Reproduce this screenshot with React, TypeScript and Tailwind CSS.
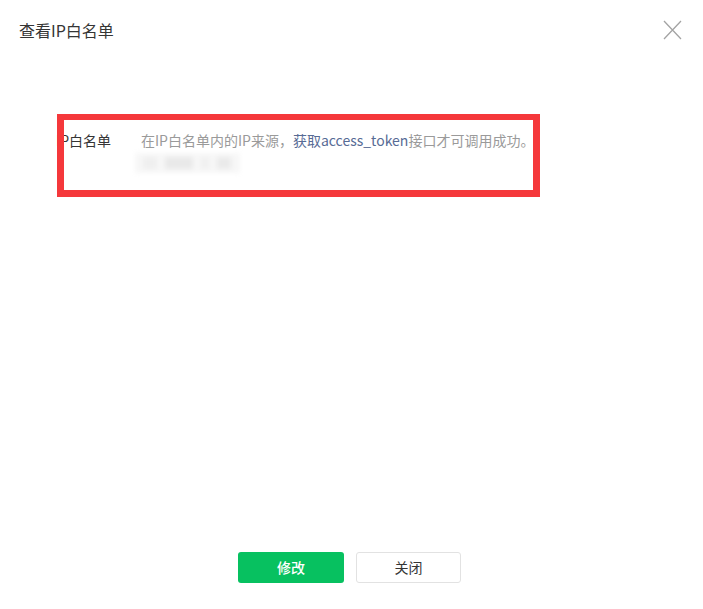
import { useState } from 'react';

export default function App() {
    const [open, setOpen] = useState(true);

    return (
        <div className="relative h-[609px] w-[703px] bg-white font-['Noto_Sans_CJK_SC','Microsoft_YaHei',sans-serif] text-[#353535] flex flex-col">
            {/* Header */}
            <div className="flex items-start justify-between pl-[19px] pr-[21px] pt-[18px]">
                <h3 className="text-[16px] leading-[24px]">查看IP白名单</h3>
                <button
                    onClick={() => setOpen(!open)}
                    className="mt-[2px] text-[#a3a3a3]"
                    title="关闭"
                >
                    <svg width="19" height="20" viewBox="0 0 19 20" fill="none" stroke="currentColor" strokeWidth="1.3">
                        <path d="M1 1 L18 19 M18 1 L1 19" />
                    </svg>
                </button>
            </div>

            {/* Body */}
            <div className="flex mt-[88px] text-[14px] leading-[20px]">
                <div className="w-[111px] shrink-0 text-right">IP白名单</div>
                <div className="ml-[30px]">
                    <p className="text-[#9a9a9a]">
                        在IP白名单内的IP来源，<span className="text-[#576b95]">获取access_token</span>接口才可调用成功。
                    </p>
                    <div className="-ml-[6px] mt-[3px] h-[20px] w-[105px] bg-[#f7f7f7] flex items-center gap-[8px] px-[8px] blur-[2.5px]">
                        <span className="h-[12px] w-[14px] bg-[#efefef]" />
                        <span className="h-[12px] w-[28px] bg-[#e9e9e9]" />
                        <span className="h-[12px] w-[8px] bg-[#f0f0f0]" />
                        <span className="h-[12px] w-[14px] bg-[#eaeaea]" />
                    </div>
                </div>
            </div>

            {/* Footer */}
            <div className="mt-auto mb-[26px] flex justify-center gap-[12px] pr-[4px]">
                <button className="h-[31px] w-[106px] rounded-[3px] bg-[#07c160] text-[14px] font-medium text-white">
                    修改
                </button>
                <button className="h-[31px] w-[105px] rounded-[3px] border border-[#e2e2e2] bg-white text-[14px] text-[#353535]">
                    关闭
                </button>
            </div>

            {/* Annotation box */}
            <div className="pointer-events-none absolute left-[57px] top-[114px] h-[83px] w-[483px] border-[7px] border-t-[6px] border-[#f5383b]" />
        </div>
    );
}
